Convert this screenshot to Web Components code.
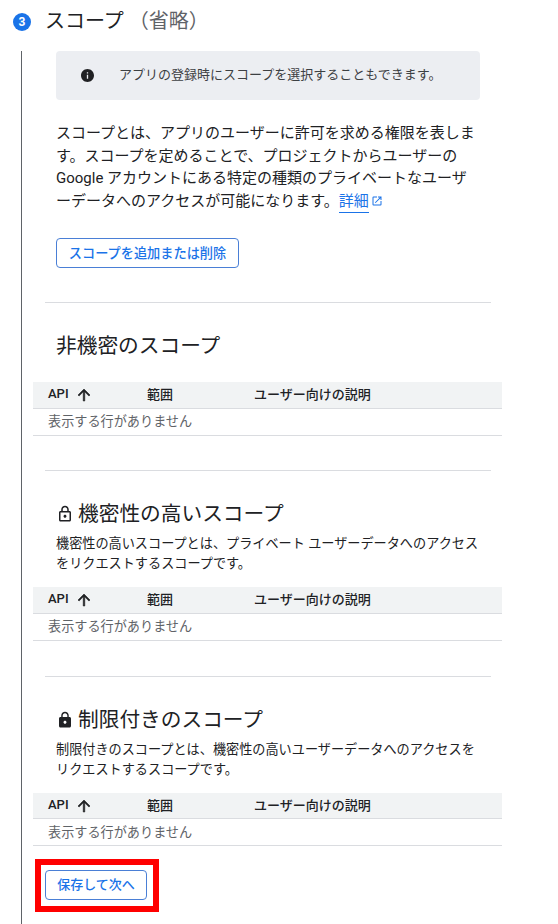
<!DOCTYPE html>
<html lang="ja">
<head>
<meta charset="utf-8">
<title>スコープ</title>
<style>
  html, body { margin: 0; padding: 0; background: #fff; }
  body { font-family: Roboto, "Noto Sans CJK JP", sans-serif; color: #202124; height: 924px; overflow: hidden; }
</style>
</head>
<body>
<scope-step>
  <info-note>アプリの登録時にスコープを選択することもできます。</info-note>
  <scope-intro></scope-intro>
  <scope-section heading="非機密のスコープ" first></scope-section>
  <scope-section heading="機密性の高いスコープ" lock="outline" text="機密性の高いスコープとは、プライベート ユーザーデータへのアクセスをリクエストするスコープです。"></scope-section>
  <scope-section heading="制限付きのスコープ" lock="filled" text="制限付きのスコープとは、機密性の高いユーザーデータへのアクセスをリクエストするスコープです。"></scope-section>
  <save-bar></save-bar>
</scope-step>

<script>
  const ARROW = `<svg width="18" height="18" viewBox="0 0 24 24"><path fill="#202124" stroke="#202124" stroke-width=".8" d="M4 12l1.41 1.41L11 7.83V20h2V7.83l5.58 5.59L20 12l-8-8-8 8z"/></svg>`;
  const LOCK_OUTLINE = `<svg width="18" height="18" viewBox="0 0 24 24"><path fill="#202124" d="M18 8h-1V6c0-2.76-2.24-5-5-5S7 3.24 7 6v2H6c-1.1 0-2 .9-2 2v10c0 1.1.9 2 2 2h12c1.1 0 2-.9 2-2V10c0-1.1-.9-2-2-2zM9 6c0-1.66 1.34-3 3-3s3 1.34 3 3v2H9V6zm9 14H6V10h12v10zm-6-3c1.1 0 2-.9 2-2s-.9-2-2-2-2 .9-2 2 .9 2 2 2z"/></svg>`;
  const LOCK_FILLED = `<svg width="18" height="18" viewBox="0 0 24 24"><path fill="#202124" d="M18 8h-1V6c0-2.76-2.24-5-5-5S7 3.24 7 6v2H6c-1.1 0-2 .9-2 2v10c0 1.1.9 2 2 2h12c1.1 0 2-.9 2-2V10c0-1.1-.9-2-2-2zm-6 9c-1.1 0-2-.9-2-2s.9-2 2-2 2 .9 2 2-.9 2-2 2zm3.1-9H8.9V6c0-1.71 1.39-3.1 3.1-3.1 1.71 0 3.1 1.39 3.1 3.1v2z"/></svg>`;

  class ScopeStep extends HTMLElement {
    constructor() {
      super();
      this.attachShadow({ mode: 'open' });
      this.shadowRoot.innerHTML = `
        <style>
          :host { display: block; }
          .head { display: flex; align-items: center; height: 42px; padding-left: 13px; }
          .num { width: 18px; height: 18px; margin-top: 2px; border-radius: 50%; background: #1a73e8; color: #fff; font: 700 12px/18px Roboto, sans-serif; text-align: center; }
          h2 { margin: 0 0 0 14px; font-weight: 400; font-size: 20px; line-height: 26px; color: #202124; white-space: pre; }
          .paren { color: #5f6368; }
          .body { margin: 9px 0 0 21px; border-left: 1px solid #5f6368; padding-left: 11px; width: 469px; height: 873px; }
        </style>
        <div class="head"><span class="num">3</span><h2>スコープ <span class="paren">（省略）</span></h2></div>
        <div class="body"><slot></slot></div>`;
    }
  }

  class InfoNote extends HTMLElement {
    constructor() {
      super();
      this.attachShadow({ mode: 'open' });
      this.shadowRoot.innerHTML = `
        <style>
          :host { display: flex; align-items: center; box-sizing: border-box; width: 424px; height: 49px; margin-left: 23px; padding-left: 25px; background: #eceef2; border-radius: 4px; font-size: 13px; color: #3c4043; }
          svg { flex: none; margin-right: 25px; }
          span { padding-bottom: 5px; }
        </style>
        <svg width="13" height="13" viewBox="2 2 20 20"><path fill="#202124" d="M12 2C6.48 2 2 6.48 2 12s4.48 10 10 10 10-4.48 10-10S17.52 2 12 2zm1 15h-2v-6h2v6zm0-8h-2V7h2v2z"/></svg>
        <span><slot></slot></span>`;
    }
  }

  class ScopeIntro extends HTMLElement {
    constructor() {
      super();
      this.attachShadow({ mode: 'open' });
      this.shadowRoot.innerHTML = `
        <style>
          :host { display: block; margin-left: 23px; width: 424px; padding-top: 22px; }
          p { margin: 0; font-size: 15px; line-height: 22.5px; color: #202124; }
          a { color: #1a73e8; text-decoration: none; border-bottom: 1px solid #1a73e8; padding-bottom: 2px; }
          button { display: block; margin: 26px 0 0; box-sizing: border-box; height: 30px; width: 183px; padding: 0 0 2px; background: #fff; border: 1px solid #4a7fd6; border-radius: 4px; color: #1a73e8; font: 500 13.2px Roboto, "Noto Sans CJK JP", sans-serif; }
        </style>
        <p>スコープとは、アプリのユーザーに許可を求める権限を表します。スコープを定めることで、プロジェクトからユーザーの Google アカウントにある特定の種類のプライベートなユーザーデータへのアクセスが可能になります。<a>詳細</a><svg width="12" height="12" viewBox="0 0 24 24" style="vertical-align:-1px;margin-left:2px"><path fill="#1a73e8" d="M19 19H5V5h7V3H5a2 2 0 0 0-2 2v14a2 2 0 0 0 2 2h14a2 2 0 0 0 2-2v-7h-2v7zM14 3v2h3.59l-9.83 9.83 1.41 1.41L19 6.41V10h2V3h-7z"/></svg></p>
        <button>スコープを追加または削除</button>`;
    }
  }

  class ScopeSection extends HTMLElement {
    constructor() {
      super();
      this.attachShadow({ mode: 'open' });
    }
    connectedCallback() {
      const heading = this.getAttribute('heading');
      const text = this.getAttribute('text');
      const lock = this.getAttribute('lock');
      const icon = lock === 'filled' ? LOCK_FILLED : lock === 'outline' ? LOCK_OUTLINE : '';
      this.shadowRoot.innerHTML = `
        <style>
          :host { display: block; width: 469px; margin-top: 34.5px; }
          :host([first]) { margin-top: 34px; }
          :host([lock="filled"]) { margin-top: 35.4px; }
          hr { border: 0; border-top: 1px solid #dadce0; margin: 0 0 0 12px; width: 446px; }
          .wrap { padding: 28px 0 0 23px; }
          h3 { display: flex; align-items: center; margin: 0; font-weight: 400; font-size: 20.7px; line-height: 30px; color: #202124; }
          h3 svg { margin-right: 4px; flex: none; }
          p { margin: 5px 0 0; width: 424px; font-size: 13.15px; line-height: 20px; color: #202124; }
          .table { margin-top: 13px; font-size: 13px; }
          :host([first]) .table { margin-top: 21px; }
          .tr { display: flex; align-items: center; box-sizing: border-box; padding-left: 15px; }
          .th { height: 26.5px; padding-bottom: 2px; background: #f1f3f4; border-bottom: 1px solid #dadce0; font-weight: 500; color: #202124; }
          .td { height: 27px; padding-bottom: 2px; border-bottom: 1px solid #dadce0; color: #5f6368; font-size: 13.15px; }
          .api { width: 99px; display: flex; align-items: center; gap: 6px; }
          .api svg { margin-top: 2px; }
          .range { width: 107px; }
        </style>
        <hr>
        <div class="wrap">
          <h3>${icon}${heading}</h3>
          ${text ? `<p>${text}</p>` : ''}
        </div>
        <div class="table">
          <div class="tr th"><span class="api">API ${ARROW}</span><span class="range">範囲</span><span>ユーザー向けの説明</span></div>
          <div class="tr td">表示する行がありません</div>
        </div>`;
    }
  }

  class SaveBar extends HTMLElement {
    constructor() {
      super();
      this.attachShadow({ mode: 'open' });
      this.shadowRoot.innerHTML = `
        <style>
          :host { display: block; padding: 13px 0 0 2px; }
          .mark { display: inline-block; box-sizing: border-box; width: 124px; height: 53px; border: 6px solid #ff0000; padding: 5px 0 0 4px; }
          button { display: block; box-sizing: border-box; width: 102px; height: 30px; padding: 0 0 4px; background: #fff; border: 1px solid #4a7fd6; border-radius: 4px; color: #1a73e8; font: 500 13px Roboto, "Noto Sans CJK JP", sans-serif; }
        </style>
        <div class="mark"><button>保存して次へ</button></div>`;
    }
  }

  customElements.define('scope-step', ScopeStep);
  customElements.define('info-note', InfoNote);
  customElements.define('scope-intro', ScopeIntro);
  customElements.define('scope-section', ScopeSection);
  customElements.define('save-bar', SaveBar);
</script>
</body>
</html>
